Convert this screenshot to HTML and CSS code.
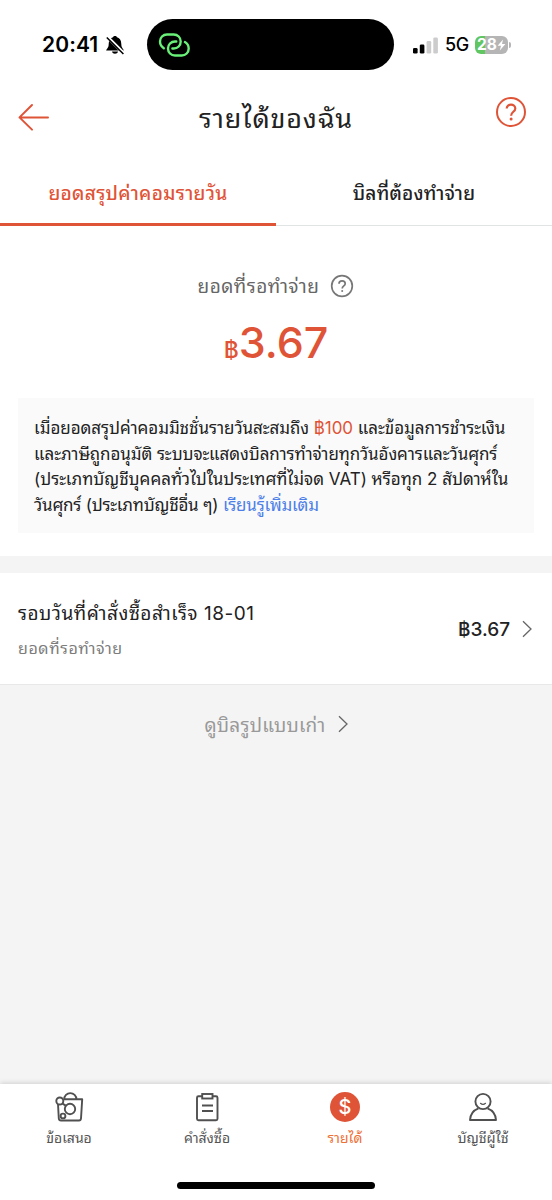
FILE: index.html
```html
<!DOCTYPE html>
<html lang="th">
<head>
<meta charset="utf-8">
<title>รายได้ของฉัน</title>
<link rel="stylesheet" href="styles.css">
</head>
<body>
<div class="app">
  <div class="status">
    <div class="status-left">
      <span class="clock">20:41</span>
      <svg class="bell" width="20" height="20" viewBox="0 0 20 20"><path d="M1.200 15.500c0-1.700 2.500-2 2.500-6.500C3.700 5 5.700 2.900 8 2.300c.5-1.900 3.500-1.900 4 0C14.300 2.900 16.300 5 16.300 9c0 4.500 2.500 4.800 2.500 6.500zM7 16.500h6c-.5 3-5.500 3-6 0z"/><path d="M2.600 2.200 19 18.500" stroke="#fff" stroke-width="3.200"/><path d="M1.800 2.500 18.400 19" stroke="#000" stroke-width="1.500"/></svg>
    </div>
    <div class="island">
      <svg width="34" height="28" viewBox="0 0 34 28" fill="none" stroke="#68f078" stroke-width="2.400" stroke-linecap="round"><path d="M5.800 17.200C3.500 15.600 2 13.400 2 10.500 2 6.500 5 3.500 9 3.500h6.700c4 0 7 3 7 7s-3 7-7 7h-1.300"/><path d="M18.300 10.500H17c-4 0-7 3-7 7s3 7 7 7h6.700c4 0 7-3 7-7 0-2.900-1.500-5.100-3.800-6.500"/></svg>
    </div>
    <div class="status-right">
      <svg class="signal" width="26" height="18" viewBox="0 0 26 18"><rect y="12" width="4.600" height="5.500" rx="1.300"/><rect x="6.800" y="8.500" width="4.600" height="9" rx="1.300"/><g fill="#ccc"><rect x="13.600" y="5" width="4.600" height="12.500" rx="1.300"/><rect x="20.300" y="1.500" width="4.600" height="16" rx="1.300"/></g></svg>
      <span class="network">5G</span>
      <div class="battery"><span>28</span><svg width="9" height="12" viewBox="0 0 9 12"><path d="M6 .5.600 6.700H4L2.800 11.500 8.400 5H5z" fill="#fff"/></svg></div><i class="battery-cap"></i>
    </div>
  </div>

  <header class="header">
    <svg class="back" width="32" height="30" viewBox="0 0 32 30" fill="none" stroke="#df5437" stroke-width="2" stroke-linecap="round" stroke-linejoin="round"><path d="M30 15.400H1.500M14 3 1.500 15.400 14 27.600"/></svg>
    <h1 class="title"><span>รายได้ของฉัน</span></h1>
    <svg class="help" width="32" height="32" viewBox="0 0 32 32" fill="none" stroke="#df5437" stroke-width="2"><circle cx="16" cy="16" r="14"/><path d="M11.700 12.500c0-5.200 8.600-5.100 8.600 0 0 3.300-4.200 3.300-4.200 7.200" stroke-width="2.200"/><circle cx="16.100" cy="22.900" r="1.500" fill="#df5437" stroke="none"/></svg>
  </header>

  <nav class="tabs">
    <div class="tab active"><span>ยอดสรุปค่าคอมรายวัน</span></div>
    <div class="tab"><span>บิลที่ต้องทำจ่าย</span></div>
  </nav>

  <section class="summary">
    <div class="pending"><span>ยอดที่รอทำจ่าย</span>
      <svg width="24" height="24" viewBox="0 0 24 24" fill="none" stroke="#777" stroke-width="1.700"><circle cx="12" cy="12" r="10.300"/><path d="M9 9.700c0-3.700 6.200-3.700 6.200 0 0 2.300-3 2.200-3 4.900"/><circle cx="12.200" cy="17" r="1" fill="#777" stroke="none"/></svg>
    </div>
    <div class="amount"><span class="baht">฿</span><span class="figure">3.67</span></div>
    <div class="notice">
      <div class="line n1"><span>เมื่อยอดสรุปค่าคอมมิชชั่นรายวันสะสมถึง <b class="red">฿100</b> และข้อมูลการชำระเงิน</span></div>
      <div class="line n2"><span>และภาษีถูกอนุมัติ ระบบจะแสดงบิลการทำจ่ายทุกวันอังคารและวันศุกร์</span></div>
      <div class="line n3"><span>(ประเภทบัญชีบุคคลทั่วไปในประเทศที่ไม่จด VAT) หรือทุก 2 สัปดาห์ใน</span></div>
      <div class="line n4"><span>วันศุกร์ (ประเภทบัญชีอื่น ๆ) <a class="link">เรียนรู้เพิ่มเติม</a></span></div>
    </div>
  </section>

  <section class="bill">
    <div class="bill-info">
      <div class="bill-title"><span>รอบวันที่คำสั่งซื้อสำเร็จ 18-01</span></div>
      <div class="bill-sub"><span>ยอดที่รอทำจ่าย</span></div>
    </div>
    <span class="bill-amount">฿3.67</span>
    <svg width="10" height="18" viewBox="0 0 10 18" fill="none" stroke="#666" stroke-width="1.300"><path d="M1 1.200 9 9 1 16.800"/></svg>
  </section>

  <div class="legacy"><span>ดูบิลรูปแบบเก่า</span>
    <svg width="10" height="18" viewBox="0 0 10 18" fill="none" stroke="#666" stroke-width="1.300"><path d="M1 1.200 9 9 1 16.800"/></svg>
  </div>

  <footer class="bottom">
    <div class="items">
      <div class="item">
        <svg width="32" height="32" viewBox="0 0 32 32" fill="none" stroke="#505050" stroke-width="1.900" stroke-linejoin="round"><path d="M10.500 8.300h18.700L28 27.500q-.2 2-2 2H8q-2 0-2.200-2L5 13M11.200 8.200a6 6 0 0 1 12.200 0M9.500 12.600l3.300 2"/><circle cx="6.800" cy="10" r="3.500"/><circle cx="17" cy="18" r="5.200"/><circle cx="10" cy="25" r="2.400"/></svg>
        <span>ข้อเสนอ</span></div>
      <div class="item">
        <svg width="32" height="32" viewBox="0 0 32 32" fill="none" stroke="#505050" stroke-width="1.900"><path d="M11 5.200H7.500q-1.500 0-1.500 1.500v21q0 1.500 1.500 1.500H25q1.500 0 1.500-1.500v-21q0-1.500-1.500-1.500h-3.500"/><rect x="11.200" y="3" width="10.300" height="4.500"/><path d="M11 14.500h11M11 20h11"/></svg>
        <span>คำสั่งซื้อ</span></div>
      <div class="item current">
        <div class="coin">$</div>
        <span>รายได้</span></div>
      <div class="item">
        <svg width="32" height="32" viewBox="0 0 32 32" fill="none" stroke="#505050" stroke-width="1.900" stroke-linejoin="round"><circle cx="16" cy="10.500" r="7.600"/><path d="M11.500 17.300C7 19 3.300 23 3 29h26C28.700 23 25 19 20.500 17.300"/><path d="M13.500 12.300q2.500 2.200 5 0" stroke-width="1.200" stroke-linecap="round"/></svg>
        <span>บัญชีผู้ใช้</span></div>
    </div>
    <div class="home"></div>
  </footer>
</div>
</body>
</html>
```
FILE: styles.css
```css
* { box-sizing: border-box; }
body { margin: 0; background: #f4f4f4; font-family: Inter, "Noto Sans Thai Looped", "Noto Looped Thai", Loma, Waree, Laksaman, Garuda, Umpush, Sarabun, FreeSans, "Noto Sans Thai", sans-serif; color: #222; }
.app { width: 552px; height: 1200px; display: flex; flex-direction: column; background: #f4f4f4; overflow: hidden; }
span { white-space: nowrap; }
.status { height: 89px; background: #fff; display: grid; grid-template-columns: 147px 247px 158px; align-items: center; flex: none; }
.status-left { display: flex; align-items: center; padding-left: 42px; gap: 5px; }
.clock { font-size: 21px; font-weight: 600; color: #000; width: 58px; letter-spacing: .1px; }
.bell { flex: none; }
.island { height: 51px; border-radius: 26px; background: #000; display: flex; align-items: center; padding-left: 11px; }
.status-right { display: flex; align-items: center; padding-left: 19px; }
.network { font-size: 18px; font-weight: 500; color: #000; margin-left: 6px; width: 30px; letter-spacing: -.3px; }
.battery { width: 33px; height: 18px; border-radius: 6px; background: linear-gradient(90deg, #5fc660 10px, #b5b5b5 10px); color: #fff; font-size: 15.500px; font-weight: 700; display: flex; align-items: center; justify-content: center; }
.battery-cap { width: 2px; height: 6px; background: #b5b5b5; border-radius: 0 2px 2px 0; margin-left: 1px; }
.header { height: 71px; background: #fff; display: grid; grid-template-columns: 60px 1fr 60px; flex: none; padding-top: 8px; }
.back { margin: 5px 0 0 18px; }
.help { margin: -1px 0 0 3px; }
.title { margin: 0; font-size: 27px; line-height: 44px; font-weight: 400; text-align: center; letter-spacing: .8px; }
.tabs { height: 66px; background: #fff; display: grid; grid-template-columns: 1fr 1fr; flex: none; }
.tab { height: 66px; text-align: center; font-size: 19px; line-height: 68px; font-weight: 500; box-shadow: inset 0 -1px #e0e4e4; letter-spacing: .2px; }
.tab.active { color: #df5437; box-shadow: inset 0 -3px #df5437; letter-spacing: .3px; }
.summary { height: 330px; background: #fff; padding: 45px 18px 0; flex: none; }
.pending { height: 30px; display: flex; align-items: center; justify-content: center; gap: 11px; color: #666; font-size: 19px; line-height: 26px; letter-spacing: .45px; }
.pending span { margin-top: 2px; }
.amount { height: 60px; margin-top: 11px; display: flex; align-items: baseline; justify-content: center; color: #df5437; line-height: 60px; font-weight: 500; }
.baht { font-size: 23px; }
.figure { font-size: 43px; }
.notice { margin-top: 26px; height: 135px; background: #fafafa; padding: 18px 16px; font-size: 17px; }
.line { height: 25.700px; line-height: 25.700px; }
.n1 { letter-spacing: -.06px; }
.n2 { letter-spacing: -.09px; }
.n3 { letter-spacing: -.01px; }
.n4 { letter-spacing: -.2px; }
.red { color: #df5437; font-weight: 400; }
.link { color: #4d7fe8; }
.bill { height: 112px; margin-top: 17px; background: #fff; border-bottom: 1px solid #e8e8e8; display: flex; align-items: center; padding: 0 20px 0 18px; flex: none; }
.bill-info { flex: 1; }
.bill-title { font-size: 19px; line-height: 38px; letter-spacing: .5px; }
.bill-sub { font-size: 16px; line-height: 30px; color: #7c7c7c; letter-spacing: .6px; }
.bill-amount { font-size: 19px; font-weight: 500; margin-right: 12px; padding-top: 1px; }
.legacy { height: 78px; display: flex; align-items: center; justify-content: center; gap: 12px; font-size: 19px; line-height: 26px; color: #999; letter-spacing: .25px; }
.legacy span { margin-top: 3px; }
.bottom { margin-top: auto; height: 116px; background: #fff; box-shadow: 0 -1px 5px rgba(0,0,0,.15); flex: none; }
.items { height: 97px; display: grid; grid-template-columns: repeat(4, 1fr); padding-top: 7px; }
.item { display: flex; flex-direction: column; align-items: center; font-size: 14px; line-height: 30px; color: #555; }
.current { color: #ed7035; }
.coin { width: 30px; height: 30px; margin: 1px 0; border-radius: 50%; background: #df5437; color: #fff; font-size: 20px; line-height: 30px; font-weight: 500; text-align: center; }
.home { width: 198px; height: 7px; border-radius: 4px; background: #000; margin: 1px auto 0; }
```
